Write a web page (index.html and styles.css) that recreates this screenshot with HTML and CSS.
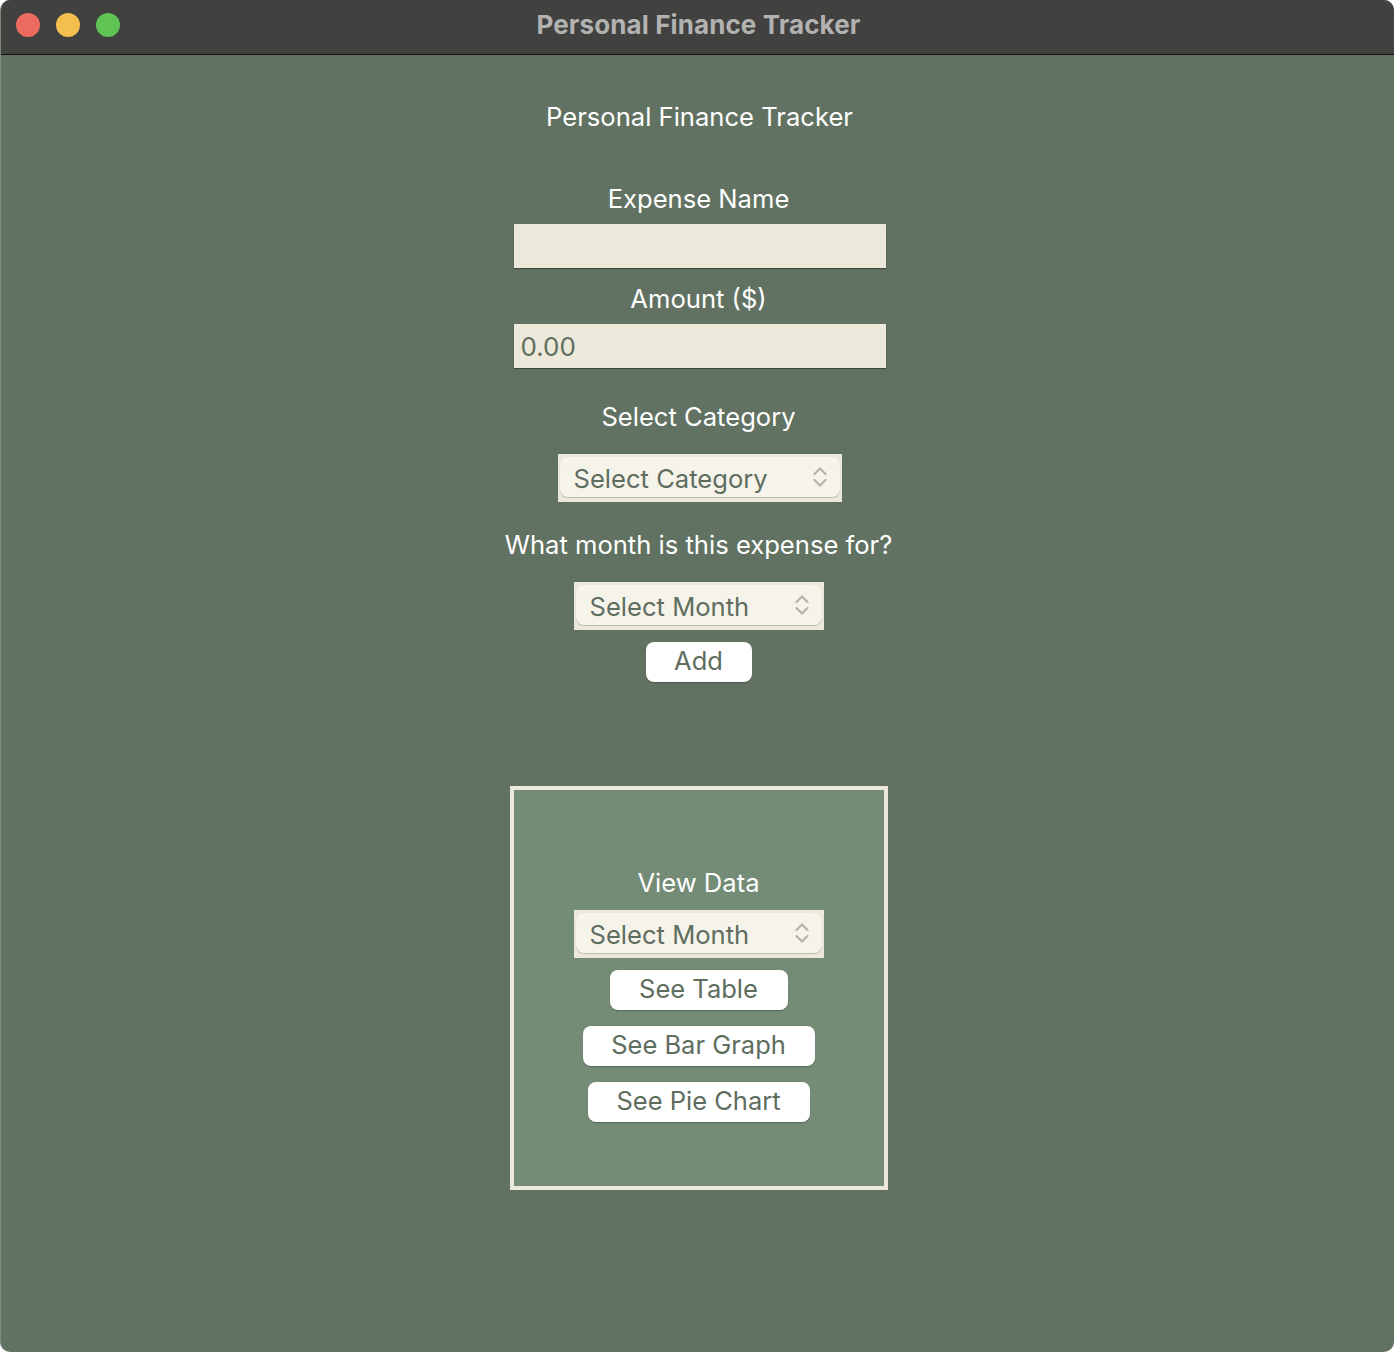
FILE: index.html
```html
<!DOCTYPE html>
<html>
<head>
<meta charset="utf-8">
<title>Personal Finance Tracker</title>
<link rel="stylesheet" href="styles.css">
</head>
<body>
<div class="window">
  <div class="titlebar">
    <div class="lights">
      <span class="light red"></span>
      <span class="light yellow"></span>
      <span class="light green"></span>
    </div>
    <div class="wintitle">Personal Finance Tracker</div>
  </div>
  <div class="content">
    <div class="label heading">Personal Finance Tracker</div>
    <div class="label l-expense">Expense Name</div>
    <div class="entry e-expense"></div>
    <div class="label l-amount">Amount ($)</div>
    <div class="entry e-amount">0.00</div>
    <div class="label l-cat">Select Category</div>
    <div class="select s-cat">
      <div class="pill"><span>Select Category</span>
        <svg class="chev" width="16" height="26" viewBox="0 0 16 26"><path d="M2.5 10 L8 4.5 L13.5 10" fill="none" stroke="#b6b3aa" stroke-width="2.2" stroke-linecap="round" stroke-linejoin="round"/><path d="M2.5 16 L8 21.5 L13.5 16" fill="none" stroke="#b6b3aa" stroke-width="2.2" stroke-linecap="round" stroke-linejoin="round"/></svg>
      </div>
    </div>
    <div class="label l-month">What month is this expense for?</div>
    <div class="select s-month">
      <div class="pill"><span>Select Month</span>
        <svg class="chev" width="16" height="26" viewBox="0 0 16 26"><path d="M2.5 10 L8 4.5 L13.5 10" fill="none" stroke="#b6b3aa" stroke-width="2.2" stroke-linecap="round" stroke-linejoin="round"/><path d="M2.5 16 L8 21.5 L13.5 16" fill="none" stroke="#b6b3aa" stroke-width="2.2" stroke-linecap="round" stroke-linejoin="round"/></svg>
      </div>
    </div>
    <button class="btn b-add">Add</button>

    <div class="panel">
      <div class="label l-view">View Data</div>
      <div class="select s-month s-view">
        <div class="pill"><span>Select Month</span>
          <svg class="chev" width="16" height="26" viewBox="0 0 16 26"><path d="M2.5 10 L8 4.5 L13.5 10" fill="none" stroke="#b6b3aa" stroke-width="2.2" stroke-linecap="round" stroke-linejoin="round"/><path d="M2.5 16 L8 21.5 L13.5 16" fill="none" stroke="#b6b3aa" stroke-width="2.2" stroke-linecap="round" stroke-linejoin="round"/></svg>
        </div>
      </div>
      <button class="btn b-table">See Table</button>
      <button class="btn b-bar">See Bar Graph</button>
      <button class="btn b-pie">See Pie Chart</button>
    </div>
  </div>
</div>
</body>
</html>
```

FILE: styles.css
```css
html, body {
  margin: 0;
  padding: 0;
  background: #ffffff;
}
body {
  font-family: Inter, "Open Sans", "Liberation Sans", sans-serif;
}
.window {
  width: 1394px;
  height: 1352px;
  border-radius: 10px;
  overflow: hidden;
  background: #627262;
  display: flex;
  flex-direction: column;
  box-sizing: border-box;
  border-left: 1px solid #7d8a7d;
}
.titlebar {
  height: 54px;
  flex: 0 0 auto;
  background: #414140;
  border-bottom: 1px solid #111111;
  display: flex;
  align-items: center;
  justify-content: center;
  position: relative;
}
.lights {
  position: absolute;
  left: 15px;
  top: 13px;
  display: flex;
  gap: 16px;
}
.light {
  width: 24px;
  height: 24px;
  border-radius: 50%;
  display: block;
}
.red { background: #ed6a5e; }
.yellow { background: #f5bf4f; }
.green { background: #5fc454; }
.wintitle {
  color: #b2b2b0;
  font-weight: 700;
  font-size: 26px;
  letter-spacing: 0.1px;
  margin-left: 2px;
  margin-top: -5px;
}
.content {
  flex: 1;
  display: flex;
  flex-direction: column;
  align-items: center;
  padding-top: 47px;
  padding-left: 2px;
}
.label {
  color: #ffffff;
  font-size: 25.6px;
  line-height: 30px;
  height: 30px;
  white-space: nowrap;
}
.heading { margin-left: 2px; }
.l-expense { margin-top: 52px; }
.entry {
  width: 372px;
  height: 44px;
  box-sizing: border-box;
  background: #ece8da;
  box-shadow: 0 1px 1px rgba(0,0,0,0.35);
  margin-top: 10px;
  margin-left: 2px;
  color: #5f6f5f;
  font-size: 26px;
  line-height: 46px;
  padding-left: 7px;
}
.l-amount { margin-top: 16px; }
.l-cat { margin-top: 34px; }
.select {
  margin-top: 22px;
  height: 48px;
  background: #ece8da;
  box-sizing: border-box;
  padding: 3px 2px 5px 2px;
}
.s-cat { width: 284px; margin-left: 2px; }
.s-month { width: 250px; margin-left: 0px; }
.pill {
  height: 40px;
  background: #f6f3eb;
  border-radius: 8px;
  box-shadow: 0 1px 1px rgba(0,0,0,0.2);
  display: flex;
  align-items: center;
  justify-content: space-between;
  padding: 0 12px 0 14px;
  box-sizing: border-box;
  color: #5e6d5e;
  font-size: 25.6px;
}
.pill span { position: relative; top: 1px; }
.chev { display: block; margin-top: 0; }
.l-month { margin-top: 28px; margin-left: 0; }
.btn {
  display: block;
  margin: 12px 0 0 0;
  height: 40px;
  background: #ffffff;
  border: none;
  border-radius: 8px;
  box-shadow: 0 1px 1px rgba(0,0,0,0.25);
  color: #5e6d5e;
  font-family: Inter, "Open Sans", "Liberation Sans", sans-serif;
  font-size: 25.5px;
  padding: 0 0 2px 0;
  line-height: 36px;
}
.b-add { width: 106px; }
.panel {
  margin-top: 104px;
  width: 378px;
  height: 404px;
  box-sizing: border-box;
  border: 4px solid #ede9da;
  background: #748b76;
  display: flex;
  flex-direction: column;
  align-items: center;
  padding-top: 78px;
}
.l-view { margin-top: 0; }
.s-view { margin-top: 12px; }
.b-table { width: 178px; margin-top: 12px; }
.b-bar { width: 232px; margin-top: 16px; }
.b-pie { width: 222px; margin-top: 16px; }
```
